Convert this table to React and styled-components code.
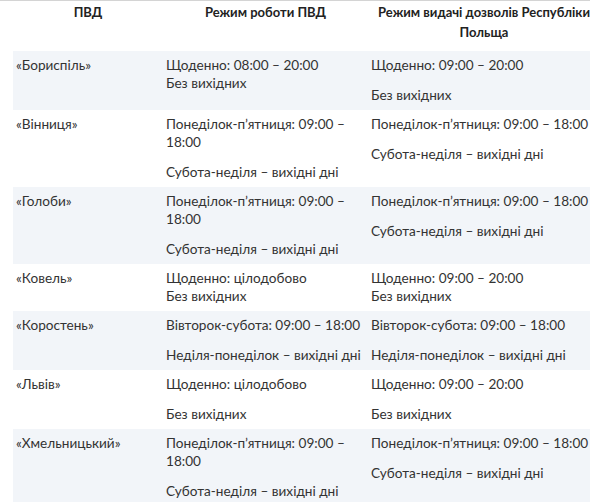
import React from "react";
import styled, { createGlobalStyle } from "styled-components";

const Global = createGlobalStyle`
  html, body {
    margin: 0;
    padding: 0;
    background: #fff;
    overflow: hidden;
  }
  body {
    font-family: Lato, "Open Sans", "Noto Sans", sans-serif;
    color: #333;
  }
`;

const Page = styled.div`
  width: 590px;
  height: 502px;
  overflow: hidden;
  border-top: 1px solid #d4d4d4;
  box-sizing: border-box;
  padding-left: 13px;
`;

const Table = styled.table`
  width: 587px;
  table-layout: fixed;
  border-collapse: collapse;
  font-size: 13.6px;
  line-height: 18px;
`;

const Col = styled.col`
  width: ${props => props.w}px;
`;

const HeadCell = styled.th`
  padding: 1px 3px 9px;
  font-size: 13px;
  line-height: 20px;
  font-weight: 700;
  color: #222;
  text-align: center;
  vertical-align: top;
`;

const Row = styled.tr`
  background: ${props => (props.shaded ? "#f2f5f9" : "#fff")};
`;

const Cell = styled.td`
  padding: 5px 3px 6px;
  vertical-align: top;
`;

const P = styled.p`
  margin: 0 0 12px;
  &:last-child {
    margin-bottom: 0;
  }
`;

const rows = [
  {
    name: "«Бориспіль»",
    work: [["Щоденно: 08:00 – 20:00", "Без вихідних"]],
    permits: [["Щоденно: 09:00 – 20:00"], ["Без вихідних"]]
  },
  {
    name: "«Вінниця»",
    work: [["Понеділок-п’ятниця: 09:00 – 18:00"], ["Субота-неділя – вихідні дні"]],
    permits: [["Понеділок-п’ятниця: 09:00 – 18:00"], ["Субота-неділя – вихідні дні"]]
  },
  {
    name: "«Голоби»",
    work: [["Понеділок-п’ятниця: 09:00 – 18:00"], ["Субота-неділя – вихідні дні"]],
    permits: [["Понеділок-п’ятниця: 09:00 – 18:00"], ["Субота-неділя – вихідні дні"]]
  },
  {
    name: "«Ковель»",
    work: [["Щоденно: цілодобово", "Без вихідних"]],
    permits: [["Щоденно: 09:00 – 20:00", "Без вихідних"]]
  },
  {
    name: "«Коростень»",
    work: [["Вівторок-субота: 09:00 – 18:00"], ["Неділя-понеділок – вихідні дні"]],
    permits: [["Вівторок-субота: 09:00 – 18:00"], ["Неділя-понеділок – вихідні дні"]]
  },
  {
    name: "«Львів»",
    work: [["Щоденно: цілодобово"], ["Без вихідних"]],
    permits: [["Щоденно: 09:00 – 20:00"], ["Без вихідних"]]
  },
  {
    name: "«Хмельницький»",
    work: [["Понеділок-п’ятниця: 09:00 – 18:00"], ["Субота-неділя – вихідні дні"]],
    permits: [["Понеділок-п’ятниця: 09:00 – 18:00"], ["Субота-неділя – вихідні дні"]]
  }
];

const Paragraphs = ({ items }) =>
  items.map((lines, i) => (
    <P key={i}>
      {lines.map((line, j) => (
        <React.Fragment key={j}>
          {j > 0 && <br />}
          {line}
        </React.Fragment>
      ))}
    </P>
  ));

export default function App() {
  return (
    <>
      <Global />
      <Page>
        <Table>
          <colgroup>
            <Col w={150} />
            <Col w={205} />
            <Col w={232} />
          </colgroup>
          <thead>
            <tr>
              <HeadCell>ПВД</HeadCell>
              <HeadCell>Режим роботи ПВД</HeadCell>
              <HeadCell>Режим видачі дозволів Республіки Польща</HeadCell>
            </tr>
          </thead>
          <tbody>
            {rows.map((row, i) => (
              <Row key={row.name} shaded={i % 2 === 0}>
                <Cell>{row.name}</Cell>
                <Cell>
                  <Paragraphs items={row.work} />
                </Cell>
                <Cell>
                  <Paragraphs items={row.permits} />
                </Cell>
              </Row>
            ))}
          </tbody>
        </Table>
      </Page>
    </>
  );
}
